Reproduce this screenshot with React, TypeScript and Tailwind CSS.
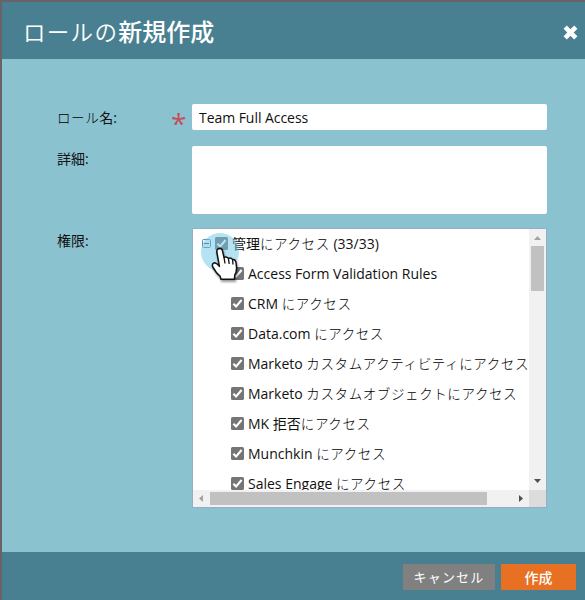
import React from "react";

const KANA = "font-['Noto_Sans_CJK_JP',sans-serif]";

function Mixed({
  text,
  kana = "font-light text-black text-[13.5px] tracking-[0.6px]",
  kanji = "font-normal",
}: {
  text: string;
  kana?: string;
  kanji?: string;
}) {
  const parts = text.match(/[\u3040-\u30ff]+|[\u4e00-\u9fff]+|[^\u3040-\u30ff\u4e00-\u9fff]+/g) ?? [];
  return (
    <>
      {parts.map((p, i) => (
        <span key={i} className={/^[\u3040-\u30ff]/.test(p) ? `${KANA} ${kana}` : /^[\u4e00-\u9fff]/.test(p) ? `${KANA} ${kanji}` : ""}>
          {p}
        </span>
      ))}
    </>
  );
}

function Check() {
  return (
    <svg viewBox="0 0 13 13" className="h-[13px] w-[13px] shrink-0">
      <rect width="13" height="13" rx="1.6" fill="#757575" />
      <path d="M2.4 6.7 L5.1 9.4 L10.6 3" fill="none" stroke="#fff" strokeWidth="2.1" />
    </svg>
  );
}

const permissions = [
  "Access Form Validation Rules",
  "CRM にアクセス",
  "Data.com にアクセス",
  "Marketo カスタムアクティビティにアクセス",
  "Marketo カスタムオブジェクトにアクセス",
  "MK 拒否にアクセス",
  "Munchkin にアクセス",
  "Sales Engage にアクセス",
];

function Pointer() {
  return (
    <div className="absolute left-[8px] top-[4px] h-[52px] w-[40px]">
      <div className="h-[38px] w-[38px] rounded-full bg-[#6cc8e8]/50" />
      <svg viewBox="0 0 30 36" className="absolute left-[9px] top-[14px] h-[36px] w-[30px] drop-shadow-[1px_2px_1px_rgba(0,0,0,0.4)]">
        <path
          d="M7.6 2.2 Q10 .4 12.2 2.6 L14 10.4 Q16.8 9.2 18.4 11.4 Q21 10.2 22.6 12.6 Q25.2 12 26 15.4 L26.6 21 Q26.6 25 24.8 28 L24.4 32.3 L11 32.3 L10 29 Q6 26 2.6 19.6 Q1.8 16 4.8 15.8 Q7 16.4 9.4 19.4 L6.8 5 Q6.6 3.2 7.6 2.2 Z"
          fill="#fff" stroke="#111" strokeWidth="1.5" strokeLinejoin="round"
        />
        <path d="M14 10.4 L15 16.5 M18.4 11.4 L19.2 17 M22.6 12.6 L23 17.5" stroke="#111" strokeWidth="1.3" />
      </svg>
    </div>
  );
}

export default function App() {
  return (
    <div className="flex h-[600px] w-[585px] flex-col overflow-hidden border-l-2 border-t-2 border-[#666469] bg-[#8bc2d0] font-['Open_Sans','Noto_Sans_CJK_JP',sans-serif] text-[14px] text-[#111]">
      <header className="flex h-[57px] shrink-0 items-center justify-between bg-[#488091] pl-[21px] pr-[7px] text-white">
        <h1 className="mt-[2px] whitespace-nowrap text-[24px] leading-[36px]">
          <Mixed text="ロールの新規作成" kana="font-[350] text-[22.5px] tracking-[1.3px]" kanji="font-medium" />
        </h1>
        <svg viewBox="0 0 15 15" className="mt-[4px] h-[15px] w-[15px]">
          <path d="M2.2 2.2 L12.8 12.8 M12.8 2.2 L2.2 12.8" stroke="#fff" strokeWidth="4.6" />
        </svg>
      </header>
      <main className="flex h-[493px] shrink-0 flex-col pl-[55px] pt-[45px]">
        <div className="flex h-[26px]">
          <label className="w-[114px] whitespace-nowrap leading-[27px]"><Mixed text="ロール名:" /></label>
          <span className="w-[21px] text-[28px] leading-[38px] text-[#c4505a]">*</span>
          <div className="w-[355px] rounded-[2px] bg-white pl-[7px] leading-[27px] tracking-[-0.05px]">Team Full Access</div>
        </div>
        <div className="mt-[16px] flex h-[68px]">
          <label className="w-[135px] leading-[25px]"><Mixed text="詳細:" /></label>
          <div className="w-[355px] rounded-[2px] bg-white" />
        </div>
        <div className="mt-[14px] flex h-[280px]">
          <label className="w-[135px] leading-[25px]"><Mixed text="権限:" /></label>
          <div className="relative flex w-[355px] flex-col border border-[#94afc5] bg-white">
            <div className="flex h-[261px]">
              <div className="-mt-px h-[262px] w-[336px] overflow-hidden">
                <div className="flex h-[30px] items-center whitespace-nowrap pl-[9px]">
                  <svg viewBox="0 0 9 9" className="mr-[4px] h-[9px] w-[9px]">
                    <rect x=".5" y=".5" width="8" height="8" rx="1" fill="#f3f7fb" stroke="#5f88b0" />
                    <path d="M2 4.5 H7" stroke="#2f5680" />
                  </svg>
                  <Check />
                  <span className="ml-[4px]"><Mixed text="管理にアクセス (33/33)" /></span>
                </div>
                {permissions.map((p) => (
                  <div key={p} className="flex h-[30px] items-center whitespace-nowrap pl-[38px]">
                    <Check />
                    <span className="ml-[4px]"><Mixed text={p} /></span>
                  </div>
                ))}
              </div>
              <div className="flex w-[17px] flex-col items-center bg-[#f1f1f1]">
                <svg viewBox="0 0 17 17" className="h-[17px] w-[17px] shrink-0"><path d="M5 11 H12 L8.5 7 Z" fill="#a3a3a3" /></svg>
                <div className="h-[45px] w-[13px] bg-[#c1c1c1]" />
                <svg viewBox="0 0 17 17" className="mt-auto h-[17px] w-[17px] shrink-0"><path d="M5 6 H12 L8.5 10 Z" fill="#505050" /></svg>
              </div>
            </div>
            <div className="flex h-[17px] items-center bg-[#f1f1f1]">
              <svg viewBox="0 0 17 17" className="h-[17px] w-[17px]"><path d="M10 5 V12 L6 8.5 Z" fill="#a3a3a3" /></svg>
              <div className="h-[13px] w-[277px] bg-[#c1c1c1]" />
              <svg viewBox="0 0 17 17" className="ml-auto h-[17px] w-[17px]"><path d="M7 5 V12 L11 8.5 Z" fill="#505050" /></svg>
              <div className="h-[17px] w-[17px] bg-[#dcdcdc]" />
            </div>
            <Pointer />
          </div>
        </div>
      </main>
      <footer className="flex h-[48px] shrink-0 items-start justify-end gap-[6px] bg-[#488091] pr-[9px] pt-[12px] text-white">
        <button className="h-[26px] w-[92px] bg-[#808080] leading-[24px]"><Mixed text="キャンセル" kana="font-normal text-[13px] tracking-[1.2px]" /></button>
        <button className="h-[26px] w-[75px] bg-[#e77022] font-['Noto_Sans_CJK_JP',sans-serif] font-medium leading-[24px]">作成</button>
      </footer>
    </div>
  );
}
